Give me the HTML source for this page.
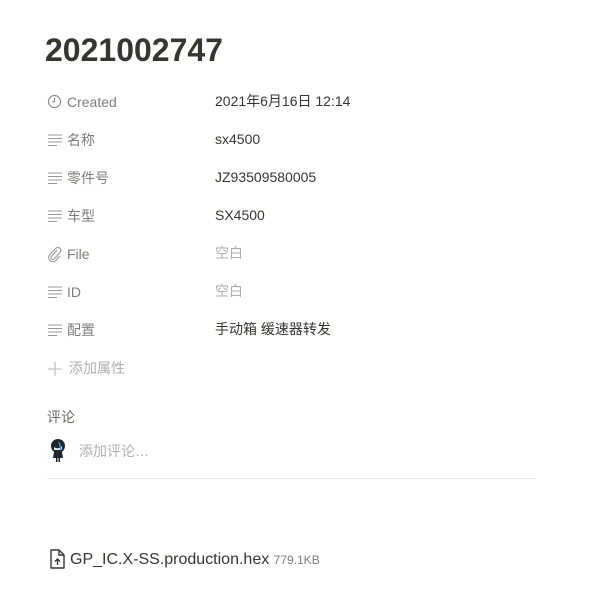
<!DOCTYPE html>
<html><head><meta charset="utf-8"><style>
body{margin:0;width:594px;height:604px;background:#fff;font-family:"Liberation Sans","Noto Sans CJK SC",sans-serif;position:relative;overflow:hidden;color:#37352f}
.a{position:absolute;white-space:nowrap}
.t{left:45px;top:30px;font-size:32px;font-weight:bold;line-height:40px;color:#37352f}
.l{left:67px;font-size:14px;color:rgba(55,53,47,.65);line-height:20px}
.v{left:215px;font-size:14px;color:#37352f;line-height:20px}
.e{color:rgba(55,53,47,.4)}
.i{left:47px}
</style></head><body>
<div class="a t">2021002747</div>

<svg class="a i" style="top:94px" width="15" height="15" viewBox="0 0 15 15"><circle cx="7.5" cy="7.5" r="6" fill="none" stroke="#8d8c88" stroke-width="1.2"/><path d="M7.5 4v3.8H5" fill="none" stroke="#8d8c88" stroke-width="1.2"/></svg>
<div class="a l" style="top:92px">Created</div><div class="a v" style="top:91px">2021年6月16日 12:14</div>

<svg class="a i" style="top:133px" width="15" height="14" viewBox="0 0 15 14"><path d="M1 2h14M1 5.5h14M1 9h14M1 12.5h9" stroke="#9a9995" stroke-width="1.1"/></svg>
<div class="a l" style="top:130px">名称</div><div class="a v" style="top:129px">sx4500</div>

<svg class="a i" style="top:171px" width="15" height="14" viewBox="0 0 15 14"><path d="M1 2h14M1 5.5h14M1 9h14M1 12.5h9" stroke="#9a9995" stroke-width="1.1"/></svg>
<div class="a l" style="top:168px">零件号</div><div class="a v" style="top:167px">JZ93509580005</div>

<svg class="a i" style="top:209px" width="15" height="14" viewBox="0 0 15 14"><path d="M1 2h14M1 5.5h14M1 9h14M1 12.5h9" stroke="#9a9995" stroke-width="1.1"/></svg>
<div class="a l" style="top:206px">车型</div><div class="a v" style="top:205px">SX4500</div>

<svg class="a i" style="top:246px" width="15" height="16" viewBox="0 0 15 16"><path d="M10 4L4.5 10.5a1.8 1.8 0 0 0 2.6 2.5L13 6.5a3 3 0 0 0-4.3-4.2L2.5 9a4.2 4.2 0 0 0 6 5.8L13 10" fill="none" stroke="#9a9995" stroke-width="1.1"/></svg>
<div class="a l" style="top:244px">File</div><div class="a v e" style="top:243px">空白</div>

<svg class="a i" style="top:285px" width="15" height="14" viewBox="0 0 15 14"><path d="M1 2h14M1 5.5h14M1 9h14M1 12.5h9" stroke="#9a9995" stroke-width="1.1"/></svg>
<div class="a l" style="top:282px">ID</div><div class="a v e" style="top:281px">空白</div>

<svg class="a i" style="top:323px" width="15" height="14" viewBox="0 0 15 14"><path d="M1 2h14M1 5.5h14M1 9h14M1 12.5h9" stroke="#9a9995" stroke-width="1.1"/></svg>
<div class="a l" style="top:320px">配置</div><div class="a v" style="top:319px">手动箱 缓速器转发</div>

<svg class="a" style="left:47px;top:361px" width="16" height="16" viewBox="0 0 16 16"><path d="M8 1v14M1 8h14" stroke="#c4c3c0" stroke-width="1.3"/></svg>
<div class="a l e" style="left:69px;top:358px">添加属性</div>

<div class="a l" style="left:47px;top:407px;color:rgba(55,53,47,.75)">评论</div>
<svg class="a" style="left:48px;top:438px" width="20" height="25" viewBox="0 0 20 25"><ellipse cx="10" cy="8" rx="7" ry="7" fill="#1f2630"/><path d="M6 9q4 3 8-1v4H6z" fill="#e8e4e0"/><path d="M11 4l2 8" stroke="#3a8fd0" stroke-width="1.5"/><path d="M6 14h8l1 6h-3v4h-1.5v-4h-1v4H8v-4H5z" fill="#1f2630"/></svg>
<div class="a l e" style="left:79px;top:441px">添加评论…</div>
<div class="a" style="left:47px;top:478px;width:489px;height:1px;background:#e9e9e7"></div>

<svg class="a" style="left:49px;top:549px" width="17" height="21" viewBox="0 0 17 21"><path d="M2 1h8l5 5v13H2z" fill="none" stroke="#37352f" stroke-width="1.4" stroke-linejoin="round"/><path d="M10 1v5h5" fill="none" stroke="#37352f" stroke-width="1.4"/><path d="M8.5 16v-6M6 12.5l2.5-2.5 2.5 2.5" fill="none" stroke="#37352f" stroke-width="1.4"/></svg>
<div class="a" style="left:70px;top:549px;font-size:16px;line-height:22px;color:#37352f">GP_IC.X-SS.production.hex <span style="font-size:12px;color:rgba(55,53,47,.65)">779.1KB</span></div>
</body></html>
